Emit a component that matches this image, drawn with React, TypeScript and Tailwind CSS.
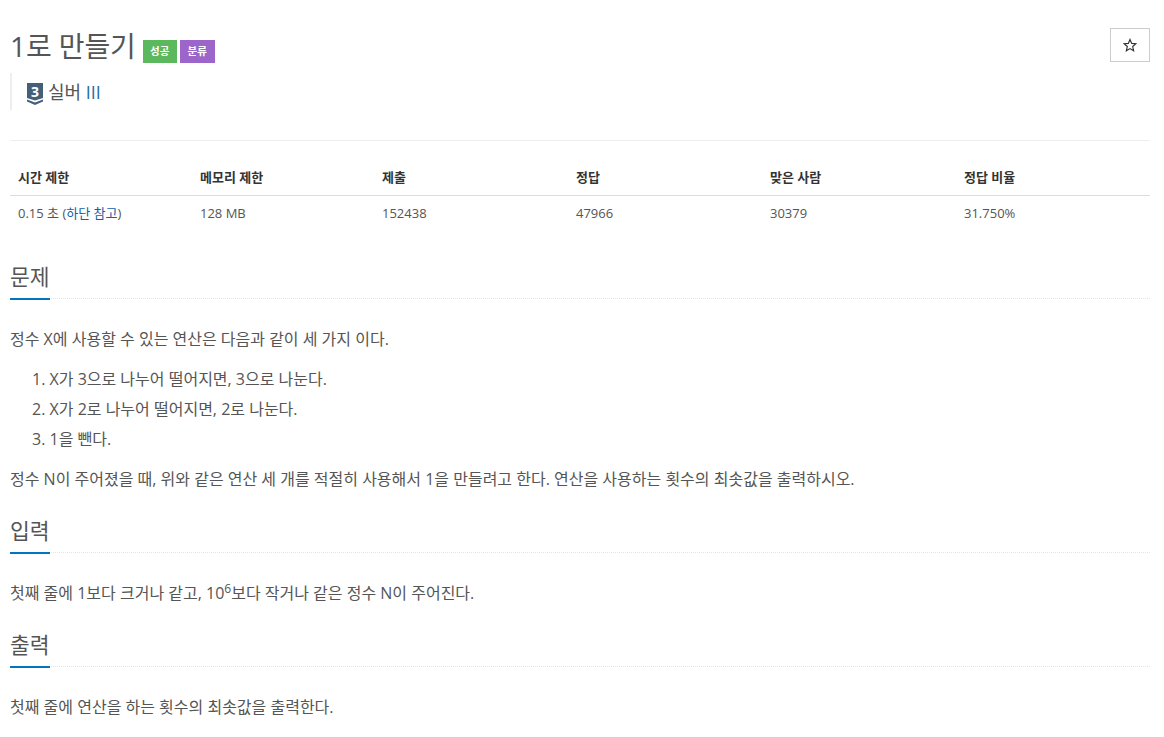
import React from 'react';

const Heading = ({ children }: { children: React.ReactNode }) => (
  <div className="relative border-b border-dotted border-[#e5e5e5] h-[38px]">
    <h2 className="text-[21.5px] leading-[32px] text-[#555] font-normal">{children}</h2>
    <span className="absolute left-0 bottom-[-2px] w-10 h-[2px] bg-[#0076c0]" />
  </div>
);

const Shield = () => (
  <svg width="16" height="22" viewBox="0 0 16 22" className="shrink-0 mt-[5px] overflow-visible">
    <path d="M0 0h16v15l-8 2.6L0 15z" fill="#435f7a" />
    <path d="M0 16.6l8 3 8-3V18.6l-8 3.4-8-3.4z" fill="#435f7a" />
    <text x="8" y="13.5" textAnchor="middle" fontSize="14" fontWeight="700" fill="#fff" fontFamily="'Open Sans', sans-serif">3</text>
  </svg>
);

const Star = () => (
  <svg width="14" height="14" viewBox="0 0 24 24" fill="none" stroke="#333" strokeWidth="2" strokeLinejoin="miter">
    <path d="M12 2.5l2.9 6.7 7.1.7-5.4 4.8 1.6 7.1L12 18.1l-6.2 3.7 1.6-7.1L2 9.9l7.1-.7z" />
  </svg>
);

const heads = ['시간 제한', '메모리 제한', '제출', '정답', '맞은 사람', '정답 비율'];
const widths = ['w-[182px]', 'w-[182px]', 'w-[194px]', 'w-[194px]', 'w-[194px]', 'w-[194px]'];

export default function App() {
  return (
    <div className="bg-white min-h-[737px] pl-[10px] pr-[14px] pt-[28px] text-[#555] font-['Open_Sans','Noto_Sans_CJK_KR',sans-serif] overflow-hidden">
      <div className="flex justify-between items-start h-[45px]">
        <div className="flex items-start">
          <h1 className="text-[28px] leading-[36px] tracking-[-0.1px] text-[#555] font-normal">1로 만들기</h1>
          <span className="ml-[7px] mt-3 h-[23px] w-[34px] bg-[#5cb85c] text-white text-[10.5px] font-bold flex items-center justify-center">성공</span>
          <span className="ml-[3px] mt-3 h-[23px] w-[35px] bg-[#9b65c9] text-white text-[10.5px] font-bold flex items-center justify-center">분류</span>
        </div>
        <button className="w-10 h-[34px] border border-[#ccc] flex items-center justify-center pr-[1px]"><Star /></button>
      </div>
      <div className="border-l-2 border-[#eee] h-[37px] pl-[15px] flex items-center gap-[5px]">
        <Shield />
        <span className="text-[18px] leading-[38px] text-[#555]">실버 <span className="text-[#2a6ea8]">III</span></span>
      </div>
      <hr className="mt-[30px] border-t border-[#eee]" />
      <table className="mt-[19px] w-full border-collapse table-fixed text-[13px] text-[#333]">
        <thead>
          <tr className="border-b border-[#ddd] h-[35px]">
            {heads.map((h, i) => (
              <th key={h} className={`${widths[i]} px-2 pt-[1px] text-left font-bold`}>{h}</th>
            ))}
          </tr>
        </thead>
        <tbody>
          <tr className="h-[36px] text-[#555]">
            <td className="px-2">0.15 초 (<span className="text-[#0b62a8]">하단 참고</span>)</td>
            <td className="px-2">128 MB</td>
            <td className="px-2">152438</td>
            <td className="px-2">47966</td>
            <td className="px-2">30379</td>
            <td className="px-2">31.750%</td>
          </tr>
        </tbody>
      </table>
      <section className="mt-[30px]">
        <Heading>문제</Heading>
        <p className="mt-[25px] text-[16px] leading-[30px]">정수 X에 사용할 수 있는 연산은 다음과 같이 세 가지 이다.</p>
        <ol className="mt-[10px] pl-[22px] list-none text-[16px] leading-[30px]">
          <li>1. X가 3으로 나누어 떨어지면, 3으로 나눈다.</li>
          <li>2. X가 2로 나누어 떨어지면, 2로 나눈다.</li>
          <li>3. 1을 뺀다.</li>
        </ol>
        <p className="mt-[10px] text-[16px] leading-[30px]">정수 N이 주어졌을 때, 위와 같은 연산 세 개를 적절히 사용해서 1을 만들려고 한다. 연산을 사용하는 횟수의 최솟값을 출력하시오.</p>
      </section>
      <section className="mt-[21px]">
        <Heading>입력</Heading>
        <p className="mt-[25px] text-[16px] leading-[30px]">첫째 줄에 1보다 크거나 같고, 10<sup className="text-[12px]">6</sup>보다 작거나 같은 정수 N이 주어진다.</p>
      </section>
      <section className="mt-[21px]">
        <Heading>출력</Heading>
        <p className="mt-[25px] text-[16px] leading-[30px]">첫째 줄에 연산을 하는 횟수의 최솟값을 출력한다.</p>
      </section>
    </div>
  );
}
